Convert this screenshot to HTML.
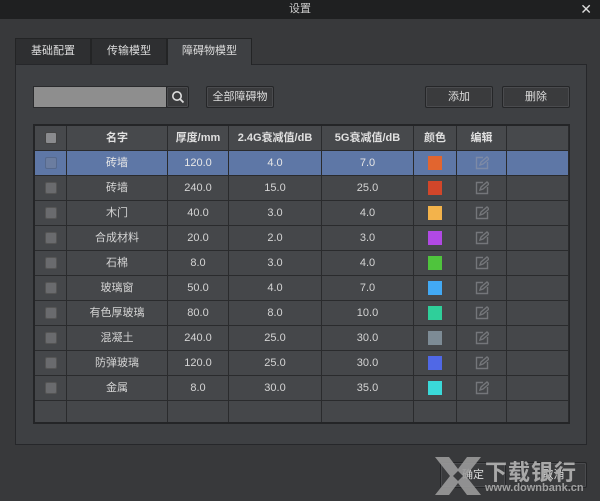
<!DOCTYPE html>
<html><head><meta charset="utf-8"><style>
*{box-sizing:border-box;margin:0;padding:0}
body{width:600px;height:501px;background:#38393b;font-family:"Liberation Sans","Noto Sans CJK SC",sans-serif;font-size:11px;color:#d8d8d8;position:relative;overflow:hidden}
.abs{position:absolute}
.title{left:0;top:0;width:600px;height:19px;background:#1f2021;text-align:center;line-height:19px;color:#ccc;font-size:11px}
.close{right:8px;top:0;line-height:19px;font-size:14px;color:#ddd}
.tab{top:38px;height:26px;background:#2e2f31;border:1px solid #232425;border-bottom:none;text-align:center;line-height:25px;color:#ddd}
.tab.act{background:#3e4043;height:27px}
.panel{left:15px;top:64px;width:572px;height:381px;background:#3e4043;border:1px solid #26272a}
.btn{height:22px;background:#3a3b3d;border:1px solid #252628;border-radius:2px;text-align:center;line-height:20px;color:#ddd;box-shadow:0 0 0 1px #4a4b4e inset}
table{position:absolute;left:33px;top:124px;border-collapse:separate;border-spacing:0;border:2px solid #242527;border-right-width:1px;table-layout:fixed;width:537px}
td{border-right:1px solid #2a2b2d;border-bottom:1px solid #2a2b2d;height:25px;line-height:22px;text-align:center;background:#45474a;color:#d4d4d4;padding:0}
tr:last-child td{border-bottom:none;height:21px}
tr.h td{background:#47494c;font-weight:bold;color:#e0e0e0}
tr.s td{background:#5e77a6;color:#e6e6e6}
.cb{display:inline-block;width:12px;height:12px;background:#6a6b6e;border:1px solid #555;border-radius:2px;vertical-align:middle}
tr.h .cb{background:#8a8b8e;border-color:#444}
.sq{display:inline-block;width:14px;height:14px;vertical-align:middle}
.ed{display:inline-block;width:14px;height:14px;vertical-align:middle}
</style></head><body>
<div class="abs title">设置</div>
<div class="abs close">✕</div>
<div class="abs panel"></div>
<div class="abs tab" style="left:15px;width:76px">基础配置</div>
<div class="abs tab" style="left:91px;width:76px">传输模型</div>
<div class="abs tab act" style="left:167px;width:85px">障碍物模型</div>
<div class="abs" style="left:33px;top:86px;width:134px;height:22px;background:#8e8e8e;border:1px solid #2a2b2d"></div>
<div class="abs btn" style="left:166px;top:86px;width:23px;padding-top:3px"><svg width="14" height="14" viewBox="0 0 14 14"><circle cx="6" cy="6" r="4.2" fill="none" stroke="#ddd" stroke-width="1.6"/><path d="M9 9l3.5 3.5" stroke="#ddd" stroke-width="1.8"/></svg></div>
<div class="abs btn" style="left:206px;top:86px;width:68px">全部障碍物</div>
<div class="abs btn" style="left:425px;top:86px;width:68px">添加</div>
<div class="abs btn" style="left:502px;top:86px;width:68px">删除</div>
<table>
<colgroup><col style="width:32px"><col style="width:101px"><col style="width:61px"><col style="width:93px"><col style="width:92px"><col style="width:43px"><col style="width:50px"><col style="width:62px"></colgroup>
<tr class="h"><td><span class="cb"></span></td><td>名字</td><td>厚度/mm</td><td>2.4G衰减值/dB</td><td>5G衰减值/dB</td><td>颜色</td><td>编辑</td><td></td></tr>
<tr class="s"><td><span class="cb" style="background:#6b7da0;border-color:#56698d"></span></td><td>砖墙</td><td>120.0</td><td>4.0</td><td>7.0</td><td><span class="sq" style="background:#e2652f"></span></td><td><svg class="ed" viewBox="0 0 14 14"><path d="M8 1.5H1.5v11h11V6M5 9l1-3 6-5 2 2-6 5z" fill="none" stroke="#7d8aa6" stroke-width="1.4"/></svg></td><td></td></tr>
<tr><td><span class="cb"></span></td><td>砖墙</td><td>240.0</td><td>15.0</td><td>25.0</td><td><span class="sq" style="background:#d2462a"></span></td><td><svg class="ed" viewBox="0 0 14 14"><path d="M8 1.5H1.5v11h11V6M5 9l1-3 6-5 2 2-6 5z" fill="none" stroke="#74767a" stroke-width="1.4"/></svg></td><td></td></tr>
<tr><td><span class="cb"></span></td><td>木门</td><td>40.0</td><td>3.0</td><td>4.0</td><td><span class="sq" style="background:#f3b34b"></span></td><td><svg class="ed" viewBox="0 0 14 14"><path d="M8 1.5H1.5v11h11V6M5 9l1-3 6-5 2 2-6 5z" fill="none" stroke="#74767a" stroke-width="1.4"/></svg></td><td></td></tr>
<tr><td><span class="cb"></span></td><td>合成材料</td><td>20.0</td><td>2.0</td><td>3.0</td><td><span class="sq" style="background:#b149e4"></span></td><td><svg class="ed" viewBox="0 0 14 14"><path d="M8 1.5H1.5v11h11V6M5 9l1-3 6-5 2 2-6 5z" fill="none" stroke="#74767a" stroke-width="1.4"/></svg></td><td></td></tr>
<tr><td><span class="cb"></span></td><td>石棉</td><td>8.0</td><td>3.0</td><td>4.0</td><td><span class="sq" style="background:#4fc43d"></span></td><td><svg class="ed" viewBox="0 0 14 14"><path d="M8 1.5H1.5v11h11V6M5 9l1-3 6-5 2 2-6 5z" fill="none" stroke="#74767a" stroke-width="1.4"/></svg></td><td></td></tr>
<tr><td><span class="cb"></span></td><td>玻璃窗</td><td>50.0</td><td>4.0</td><td>7.0</td><td><span class="sq" style="background:#42a9f4"></span></td><td><svg class="ed" viewBox="0 0 14 14"><path d="M8 1.5H1.5v11h11V6M5 9l1-3 6-5 2 2-6 5z" fill="none" stroke="#74767a" stroke-width="1.4"/></svg></td><td></td></tr>
<tr><td><span class="cb"></span></td><td>有色厚玻璃</td><td>80.0</td><td>8.0</td><td>10.0</td><td><span class="sq" style="background:#2fcf9a"></span></td><td><svg class="ed" viewBox="0 0 14 14"><path d="M8 1.5H1.5v11h11V6M5 9l1-3 6-5 2 2-6 5z" fill="none" stroke="#74767a" stroke-width="1.4"/></svg></td><td></td></tr>
<tr><td><span class="cb"></span></td><td>混凝土</td><td>240.0</td><td>25.0</td><td>30.0</td><td><span class="sq" style="background:#7d8b95"></span></td><td><svg class="ed" viewBox="0 0 14 14"><path d="M8 1.5H1.5v11h11V6M5 9l1-3 6-5 2 2-6 5z" fill="none" stroke="#74767a" stroke-width="1.4"/></svg></td><td></td></tr>
<tr><td><span class="cb"></span></td><td>防弹玻璃</td><td>120.0</td><td>25.0</td><td>30.0</td><td><span class="sq" style="background:#5068e6"></span></td><td><svg class="ed" viewBox="0 0 14 14"><path d="M8 1.5H1.5v11h11V6M5 9l1-3 6-5 2 2-6 5z" fill="none" stroke="#74767a" stroke-width="1.4"/></svg></td><td></td></tr>
<tr><td><span class="cb"></span></td><td>金属</td><td>8.0</td><td>30.0</td><td>35.0</td><td><span class="sq" style="background:#3ad9d9"></span></td><td><svg class="ed" viewBox="0 0 14 14"><path d="M8 1.5H1.5v11h11V6M5 9l1-3 6-5 2 2-6 5z" fill="none" stroke="#74767a" stroke-width="1.4"/></svg></td><td></td></tr>
<tr><td></td><td></td><td></td><td></td><td></td><td></td><td></td><td></td></tr>
</table>
<div class="abs btn" style="left:440px;top:462px;width:66px;height:26px;line-height:24px">确定</div>
<div class="abs btn" style="left:520px;top:462px;width:67px;height:26px;line-height:24px">取消</div>
<svg class="abs" style="left:433px;top:455px" width="50" height="42" viewBox="0 0 50 42"><path d="M2 2h14l9 12 9-12h14L33 21l15 19H34l-9-12-9 12H2l15-19z" fill="#9a9a9a" opacity=".9"/><path d="M25 16l5 5-5 5-5-5z" fill="#38393b"/></svg>
<div class="abs" style="left:485px;top:455px;font-size:22px;font-weight:bold;color:#a8a8a8;letter-spacing:1px">下载银行</div>
<div class="abs" style="left:485px;top:482px;font-size:11px;font-weight:bold;color:#a0a0a0">www.downbank.cn</div>
</body></html>
